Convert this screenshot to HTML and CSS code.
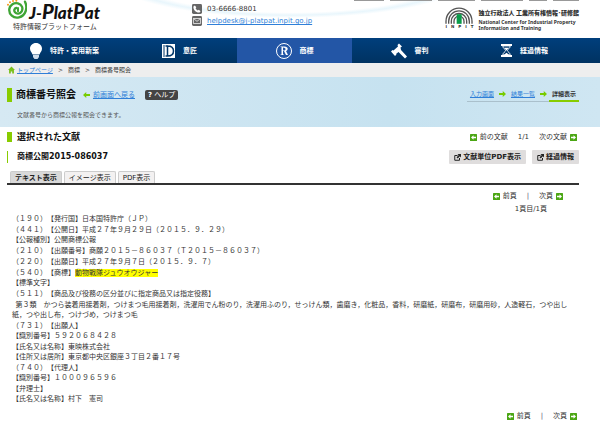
FILE: index.html
```html
<!DOCTYPE html>
<html lang="ja">
<head>
    <meta charset="UTF-8">
    <meta name="viewport" content="width=device-width, initial-scale=1.0">
    <title>商標番号照会 | J-PlatPat</title>
    <link rel="stylesheet" href="styles.css">
</head>
<body>

    <!-- Shared icons -->
    <svg class="sprite" aria-hidden="true">
        <symbol id="box-left" viewBox="0 0 14 14">
            <rect width="14" height="14" rx="1" fill="#4ba614"/>
            <path d="M2 7 7 2.500v3h5v3H7v3z" fill="#fff"/>
        </symbol>
        <symbol id="box-right" viewBox="0 0 14 14">
            <rect width="14" height="14" rx="1" fill="#4ba614"/>
            <path d="M12 7 7 2.500v3H2v3h5v3z" fill="#fff"/>
        </symbol>
        <symbol id="arrow" viewBox="0 0 14 12">
            <path d="M14 6 7.500 0v3.800H0v4.400h7.500V12z" fill="#7c0"/>
        </symbol>
        <symbol id="popup" viewBox="0 0 14 14">
            <path d="M7 3H1.500v9.500H11V8" fill="none" stroke="#222" stroke-width="2"/>
            <path d="M7 0h7v7l-2.300-2.300L7.500 9 5 6.500l4.300-4.200z" fill="#222"/>
        </symbol>
    </svg>

    <header class="header">
        <div class="brand">
            <a class="logo" href="#">
                <svg class="logo-mark" viewBox="0 0 60 57" aria-hidden="true">
                    <g fill="none" stroke="#3fa535" stroke-linecap="round">
                        <path d="M54 5c9 19 2 42-18 47C19 56 5 43 7 27c2-13 14-20 26-17 12 3 16 15 11 24-5 8-15 9-20 3-4-5-2-12 4-13" stroke-width="7"/>
                        <path d="M33 24v10" stroke-width="6"/>
                    </g>
                    <g fill="#f39a1e">
                        <circle cx="3" cy="14" r="3"/>
                        <circle cx="9" cy="7" r="3"/>
                        <circle cx="18" cy="3" r="3"/>
                        <circle cx="28" cy="2" r="3"/>
                    </g>
                </svg>
                <span class="logo-text">J-<b>P</b>lat<b>P</b>at</span>
            </a>
            <p class="tagline">特許情報プラットフォーム</p>
        </div>

        <ul class="contact">
            <li class="hours">ヘルプデスク (9:00-21:00)</li>
            <li>
                <svg viewBox="0 0 28 28" aria-hidden="true">
                    <rect width="28" height="28" rx="4" fill="#666"/>
                    <path d="M8 4l4 5-2 3c1 3 3 5 6 6l3-2 5 4-3 4C11 25 3 16 4 7z" fill="#fff"/>
                </svg>
                <span>03-6666-8801</span>
            </li>
            <li>
                <svg viewBox="0 0 28 28" aria-hidden="true">
                    <rect width="28" height="28" rx="4" fill="#666"/>
                    <path d="M4 7h20v14H4zM4 7l10 8 10-8" fill="none" stroke="#fff" stroke-width="2"/>
                </svg>
                <a href="mailto:helpdesk@j-platpat.inpit.go.jp">helpdesk@j-platpat.inpit.go.jp</a>
            </li>
        </ul>

        <div class="header-right">
            <!-- Lower edges of the utility links -->
            <div class="utility" aria-hidden="true">
                <i></i><i></i><i></i><i></i><i></i><i></i>
            </div>
            <div class="inpit">
                <div class="inpit-mark">
                    <svg viewBox="0 0 84 50" aria-hidden="true">
                        <g fill="none" stroke="#555" stroke-width="4">
                            <path d="M3 50V42a39 39 0 0 1 78 0v8"/>
                            <path d="M11 50V42a31 31 0 0 1 62 0v8"/>
                            <path d="M19 50V42a23 23 0 0 1 46 0v8"/>
                            <path d="M27 50V42a15 15 0 0 1 30 0v8"/>
                        </g>
                        <path d="M35 21h15v29H35z" fill="#0a9c4a"/>
                    </svg>
                    <p class="inpit-name"><span>I</span><span>N</span><span>P</span><span>I</span><span>T</span></p>
                </div>
                <p class="inpit-text">
                    <b>独立行政法人 工業所有権情報･研修館</b>
                    <span>National Center for Industrial Property<br>Information and Training</span>
                </p>
            </div>
        </div>
    </header>

    <nav class="menu">
        <a href="#">
            <svg class="bulb" viewBox="0 0 24 32" aria-hidden="true">
                <path d="M12 0c7 0 12 5 12 11 0 5-3 7-5 12H5C3 18 0 16 0 11 0 5 5 0 12 0z" fill="#fff"/>
                <path d="M6 24h12v4l-3 4H9l-3-4z" fill="#cfdcea"/>
            </svg>
            特許・実用新案
        </a>
        <a href="#">
            <svg class="design" viewBox="0 0 26 28" aria-hidden="true">
                <path d="M0 0h26v28H0z" fill="#fff"/>
                <path d="M4 2v24" stroke="#003668" stroke-width="2"/>
                <path d="M7 4h4v20H7M11 4c8 0 12 3 12 10s-4 10-12 10" fill="none" stroke="#003668" stroke-width="3"/>
            </svg>
            意匠
        </a>
        <a href="#" class="active">
            <svg viewBox="0 0 32 32" aria-hidden="true">
                <circle cx="16" cy="16" r="15" fill="none" stroke="#fff" stroke-width="2"/>
                <path d="M9 7h8c8 0 8 8 3 9l4 8h-4l-4-8h-2v7h2v1H9v-1h2V8H9zM14 9v6c7 1 7-6 0-6z" fill="#fff"/>
            </svg>
            商標
        </a>
        <a href="#">
            <svg viewBox="0 0 32 32" aria-hidden="true">
                <path d="M16 1l6 6-3 2 1 5 12 13-4 4-13-13-5 4 1 1-3 3-8-9 3-3 2 1 9-8-1-3z" fill="#fff"/>
            </svg>
            審判
        </a>
        <a href="#">
            <svg class="hourglass" viewBox="0 0 24 28" aria-hidden="true">
                <path d="M0 0h24v4H0zM0 24h24v4H0z" fill="#fff"/>
                <path d="M4 4c0 6 6 7 6 10S4 18 4 24h16c0-6-6-7-6-10s6-4 6-10z" fill="none" stroke="#fff" stroke-width="2"/>
                <path d="M7 8h10l-5 6zM6 24l6-5 6 5z" fill="#fff"/>
            </svg>
            経過情報
        </a>
    </nav>

    <div class="breadcrumb">
        <svg viewBox="0 0 20 20" aria-hidden="true"><path d="M10 0 20 10h-3v10h-5v-6H8v6H3V10H0z" fill="#7ac01c"/></svg>
        <a href="#">トップページ</a>
        <span>&gt;</span>
        <span>商標</span>
        <span>&gt;</span>
        <span>商標番号照会</span>
    </div>

    <section class="title-band">
        <div class="title-row">
            <h1>商標番号照会</h1>
            <svg class="back-arrow" aria-hidden="true"><use href="#arrow"/></svg>
            <a href="#">前画面へ戻る</a>
            <button type="button" class="help"><b>?</b> ヘルプ</button>
            <ol class="steps">
                <li><a href="#">入力画面</a></li>
                <li><svg aria-hidden="true"><use href="#arrow"/></svg></li>
                <li><a href="#">結果一覧</a></li>
                <li><svg aria-hidden="true"><use href="#arrow"/></svg></li>
                <li class="current">詳細表示</li>
            </ol>
        </div>
        <p>文献番号から商標公報を照会できます。</p>
    </section>

    <main class="content">
        <div class="row document-row">
            <h2>選択された文献</h2>
            <div class="document-pager">
                <span class="pager-item"><svg aria-hidden="true"><use href="#box-left"/></svg>前の文献</span>
                <span>1/1</span>
                <span class="pager-item">次の文献<svg aria-hidden="true"><use href="#box-right"/></svg></span>
            </div>
        </div>

        <div class="row number-row">
            <h3>商標公開2015-086037</h3>
            <div class="actions">
                <button type="button"><svg aria-hidden="true"><use href="#popup"/></svg>文献単位PDF表示</button>
                <button type="button"><svg aria-hidden="true"><use href="#popup"/></svg>経過情報</button>
            </div>
        </div>

        <div class="tabs">
            <button type="button" class="selected">テキスト表示</button>
            <button type="button">イメージ表示</button>
            <button type="button">PDF表示</button>
        </div>

        <div class="page-info">
            <div class="page-pager">
                <span class="pager-item"><svg aria-hidden="true"><use href="#box-left"/></svg>前頁</span>
                <span class="bar">|</span>
                <span class="pager-item">次頁<svg aria-hidden="true"><use href="#box-right"/></svg></span>
            </div>
            <p>1頁目/1頁</p>
        </div>

        <article class="gazette">
            <p>（１９０）【発行国】日本国特許庁（ＪＰ）</p>
            <p>（４４１）【公開日】平成２７年９月２９日（２０１５．９．２９）<br>【公報種別】公開商標公報</p>
            <p>（２１０）【出願番号】商願２０１５－８６０３７（Ｔ２０１５－８６０３７）</p>
            <p>（２２０）【出願日】平成２７年９月７日（２０１５．９．７）</p>
            <p>（５４０）【商標】<mark>動物戦隊ジュウオウジャー</mark><br>【標準文字】</p>
            <p>（５１１）【商品及び役務の区分並びに指定商品又は指定役務】</p>
            <p>&ensp;第３類&ensp;&ensp;かつら装着用接着剤，つけまつ毛用接着剤，洗濯用でん粉のり，洗濯用ふのり，せっけん類，歯磨き，化粧品，香料，研磨紙，研磨布，研磨用砂，人造軽石，つや出し紙，つや出し布，つけづめ，つけまつ毛</p>
            <p>（７３１）【出願人】<br>【識別番号】５９２０６８４２８</p>
            <p>【氏名又は名称】東映株式会社<br>【住所又は居所】東京都中央区銀座３丁目２番１７号</p>
            <p>（７４０）【代理人】<br>【識別番号】１０００９６５９６</p>
            <p>【弁理士】<br>【氏名又は名称】村下　憲司</p>
        </article>

        <div class="page-pager bottom-pager">
            <span class="pager-item"><svg aria-hidden="true"><use href="#box-left"/></svg>前頁</span>
            <span class="bar">|</span>
            <span class="pager-item">次頁<svg aria-hidden="true"><use href="#box-right"/></svg></span>
        </div>
    </main>

</body>
</html>
```
FILE: styles.css
```css
/* Reset some default styles */
* {
    margin: 0;
    padding: 0;
    box-sizing: border-box;
}

body {
    font-family: "DejaVu Sans", "Noto Sans CJK JP", sans-serif;
    font-size: 7px;
    line-height: 10px;
    color: #333;
    background-color: #fff;
    text-spacing-trim: space-all;
}

ul, ol {
    list-style: none;
}

a {
    color: #2f7fd8;
}

button {
    font-family: inherit;
    font-size: 7px;
    line-height: 10px;
    color: #222;
    border: none;
    cursor: pointer;
}

svg {
    display: block;
    flex: none;
}

.sprite {
    display: none;
}

/* Header */
.header {
    display: flex;
    height: 38px;
    padding: 0 21px 0 7px;
    overflow: hidden;
    background: radial-gradient(ellipse 180px 40px at 290px -22px, #fff 86%, #e9f6fc 93%, #fff 100%);
}

.brand {
    width: 180px;
}

.logo {
    display: flex;
    gap: 2px;
    height: 21px;
    text-decoration: none;
}

.logo-mark {
    width: 20px;
    height: 19px;
}

.logo-text {
    font-family: "Lato", sans-serif;
    font-size: 17px;
    font-weight: 900;
    font-style: italic;
    line-height: 22px;
    color: #111;
}

.logo-text b {
    font-size: 20px;
    font-weight: 900;
}

.tagline {
    padding-left: 6px;
    line-height: 12px;
}

.contact {
    display: flex;
    flex-direction: column;
    gap: 2px;
    padding-left: 5px;
}

.contact li {
    display: flex;
    align-items: center;
    gap: 5px;
}

/* Opening hours run off the top of the page */
.contact .hours {
    margin: -8px 0 0 6px;
    font-size: 8px;
}

.contact svg {
    width: 10px;
    height: 10px;
}

.header-right {
    display: flex;
    flex-direction: column;
    align-items: flex-end;
    margin-left: auto;
}

.utility {
    display: grid;
    grid-template-columns: 30px 42px 37px 42px 18px 26px;
    gap: 6px;
}

.utility i {
    height: 1px;
    background-color: #999;
}

.inpit {
    display: flex;
    gap: 5px;
    padding-top: 6px;
}

.inpit-mark svg {
    width: 28px;
    height: 17px;
}

.inpit-name {
    display: flex;
    justify-content: space-between;
    font-size: 4px;
    font-weight: bold;
    line-height: 6px;
}

.inpit-text {
    font-family: "Noto Sans", "Noto Sans CJK JP", sans-serif;
    font-size: 5px;
    font-weight: bold;
    line-height: 6px;
    white-space: nowrap;
}

.inpit-text b {
    display: block;
    font-size: 6px;
    line-height: 12px;
}

/* Main menu */
.menu {
    display: flex;
    height: 25px;
    padding: 0 18px 0 7px;
    background: linear-gradient(#003f7c, #003261);
}

.menu a {
    flex: 1 1 0;
    display: flex;
    align-items: center;
    justify-content: center;
    gap: 8px;
    color: #fff;
    font-weight: bold;
    text-decoration: none;
}

.menu .active {
    background-color: #2356a6;
}

.menu svg {
    width: 16px;
    height: 16px;
}

.menu .bulb {
    width: 12px;
}

.menu .design {
    width: 13px;
    height: 14px;
}

.menu .hourglass {
    width: 11px;
    height: 13px;
}

/* Breadcrumb */
.breadcrumb {
    display: flex;
    align-items: center;
    gap: 5px;
    height: 14px;
    padding-left: 8px;
    font-size: 6px;
    background-color: #eee;
}

.breadcrumb svg {
    width: 7px;
    height: 8px;
    margin-right: -3px;
}

/* Page title */
.title-band {
    height: 50px;
    padding: 10px 21px 0 7px;
    background: linear-gradient(90deg, #d6e9f3, #c6e2f0 65%, #cfe6f2);
}

.title-row {
    display: flex;
    align-items: center;
    height: 16px;
}

h1 {
    padding-left: 4px;
    border-left: 5px solid #8c0;
    font-size: 10px;
    line-height: 14px;
    color: #111;
}

.back-arrow {
    width: 7px;
    height: 6px;
    margin: 0 3px 0 7px;
    transform: rotate(180deg);
}

.help {
    height: 10px;
    margin-left: 10px;
    padding: 0 3px;
    border-radius: 2px;
    background-color: #444;
    color: #fff;
}

.steps {
    display: flex;
    align-items: flex-start;
    margin-left: auto;
    font-size: 6px;
}

.steps li {
    display: flex;
    align-items: center;
    height: 14px;
    padding: 0 2px 2px 3px;
    border-bottom: 1px solid #aac0cc;
}

.steps svg {
    width: 7px;
    height: 6px;
}

.steps .current {
    padding: 0 3px 1px;
    border-bottom: 2px solid #8c0;
    font-weight: bold;
}

.title-band p {
    padding: 7px 0 0 10px;
    font-size: 6px;
    color: #555;
}

/* Document */
.content {
    padding: 0 21px 0 7px;
}

.row {
    display: flex;
    align-items: center;
    justify-content: space-between;
}

.document-row {
    height: 20px;
}

.number-row {
    height: 18px;
    margin-top: 1px;
}

h2 {
    padding-left: 5px;
    border-left: 5px solid #8c0;
    font-size: 9px;
    line-height: 10px;
    color: #111;
}

h3 {
    padding-left: 9px;
    border-left: 1px solid #8c0;
    font-size: 8px;
    line-height: 12px;
    color: #111;
}

.document-pager {
    display: flex;
    gap: 10px;
    padding-right: 2px;
}

.pager-item {
    display: flex;
    align-items: center;
    gap: 3px;
}

.pager-item svg {
    width: 7px;
    height: 7px;
}

.actions {
    display: flex;
    gap: 6px;
}

.actions button {
    display: flex;
    align-items: center;
    gap: 2px;
    height: 14px;
    padding: 0 5px;
    border-radius: 1px;
    background-color: #dfdddd;
    font-weight: bold;
}

.actions svg {
    width: 7px;
    height: 7px;
}

/* Tabs */
.tabs {
    display: flex;
    gap: 2px;
    margin-top: 5px;
    padding-left: 3px;
    border-bottom: 2px solid #333;
}

.tabs button {
    height: 12px;
    padding: 0 4px;
    border: 1px solid #ccc;
    border-bottom: none;
    border-radius: 2px 2px 0 0;
    background-color: #f3f1f1;
}

.tabs .selected {
    background-color: #d9d9d9;
    font-weight: bold;
}

.page-info {
    display: flex;
    flex-direction: column;
    align-items: flex-end;
    gap: 3px;
    padding: 6px 16px 0 0;
}

.page-info p {
    padding-right: 16px;
}

.page-pager {
    display: flex;
    justify-content: flex-end;
    gap: 10px;
}

.bar {
    color: #557;
}

/* Gazette text */
.gazette {
    display: flex;
    flex-direction: column;
    gap: 1px;
    padding: 0 9px 0 5px;
}

.gazette mark {
    background-color: #ff0;
    color: #333;
}

.bottom-pager {
    padding: 7px 2px 0 0;
}
```
